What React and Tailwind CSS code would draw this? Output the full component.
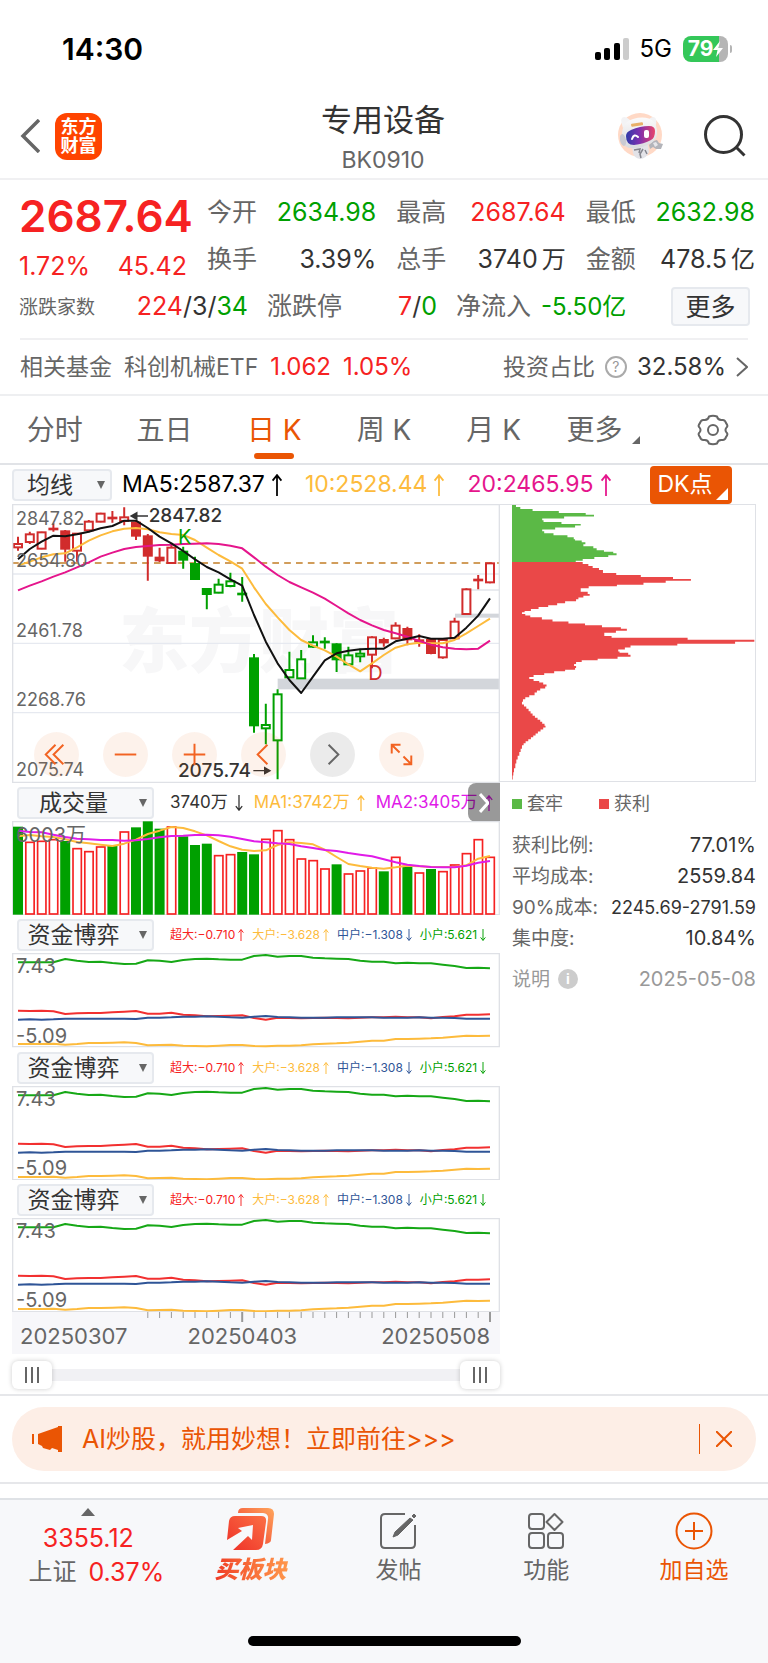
import { useState } from "react";

const STEP = 35.4;
const xAt = (i) => 18 + STEP * i;

// high, open/close top, open/close bottom, low, kind
const candles = [
  [110, 132, 142, 152, "r"], [95, 103, 126, 132, "r"], [95, 97, 146, 148, "r"],
  [70, 86, 88, 95, "R"], [90, 94, 146, 185, "R"], [100, 101, 152, 185, "r"],
  [60, 65, 91, 97, "r"], [38, 41, 65, 67, "r"], [33, 53, 55, 68, "R"],
  [22, 52, 63, 76, "r"], [62, 68, 107, 120, "R"], [102, 109, 167, 242, "R"],
  [143, 173, 181, 186, "R"], [128, 143, 189, 192, "r"], [140, 155, 179, 206, "G"],
  [170, 192, 237, 238, "G"], [264, 267, 282, 328, "G"], [236, 254, 278, 280, "g"],
  [218, 244, 258, 262, "g"], [231, 281, 283, 305, "G"], [462, 475, 676, 698, "G"],
  [611, 675, 685, 733, "g"], [568, 583, 721, 838, "g"], [455, 510, 532, 535, "g"],
  [450, 478, 535, 537, "g"], [406, 427, 440, 443, "g"], [412, 425, 427, 446, "G"],
  [430, 433, 478, 516, "G"], [440, 466, 493, 496, "g"], [446, 461, 469, 487, "g"],
  [409, 412, 464, 505, "r"], [413, 420, 427, 440, "R"], [367, 377, 415, 418, "r"],
  [380, 387, 418, 436, "R"], [403, 421, 424, 440, "R"], [415, 420, 459, 463, "R"],
  [414, 420, 472, 476, "r"], [353, 365, 415, 418, "r"], [265, 268, 342, 344, "r"],
  [225, 239, 241, 268, "R"], [188, 190, 247, 250, "r"],
];

const ma5 = [178, 147, 125, 107, 109, 103, 95, 85, 78, 62, 62, 84, 110, 130, 153, 178, 201, 217, 238, 257, 345, 425, 490, 540, 579, 530, 481, 460, 452, 448, 446, 446, 424, 416, 408, 416, 416, 413, 383, 347, 295];
const ma10 = [197, 185, 172, 163, 160, 142, 122, 106, 94, 86, 84, 88, 97, 102, 105, 120, 143, 165, 184, 206, 262, 312, 352, 390, 420, 437, 451, 470, 493, 514, 490, 465, 443, 433, 428, 430, 430, 420, 400, 378, 356];
const ma20 = [271, 257, 244, 230, 217, 202, 187, 170, 158, 147, 141, 138, 135, 134, 132, 131, 130, 132, 137, 145, 172, 200, 225, 246, 262, 278, 296, 318, 340, 360, 376, 390, 400, 410, 423, 434, 442, 446, 448, 446, 422];

const volumes = [141, 186, 183, 178, 184, 205, 214, 200, 196, 155, 143, 125, 147, 140, 170, 196, 192, 226, 223, 217, 224, 177, 151, 178, 236, 241, 266, 254, 281, 272, 263, 275, 231, 258, 278, 268, 274, 254, 220, 178, 231];
const volumeDown = [0, 4, 8, 10, 11, 12, 14, 15, 16, 19, 20, 27, 31, 33, 35];
const volMa1 = [170, 166, 170, 172, 179, 187, 191, 195, 199, 192, 180, 163, 153, 142, 145, 155, 167, 184, 200, 210, 214, 212, 196, 188, 190, 194, 210, 232, 253, 259, 264, 267, 263, 258, 260, 262, 262, 262, 257, 237, 229];
const volMa2 = [153, 157, 158, 165, 172, 177, 179, 181, 181, 183, 182, 178, 173, 169, 168, 166, 165, 167, 171, 178, 185, 188, 191, 193, 200, 205, 211, 214, 220, 225, 230, 239, 248, 255, 259, 262, 263, 263, 258, 249, 244];

const flowGreen = [128, 128, 128, 128, 118, 123, 127, 126, 130, 133, 132, 122, 123, 127, 121, 118, 117, 119, 120, 120, 109, 106, 111, 109, 109, 114, 116, 117, 118, 123, 126, 126, 131, 129, 131, 131, 135, 139, 145, 144, 146];
const flowRed = [273, 274, 273, 275, 283, 281, 280, 280, 278, 276, 274, 282, 282, 279, 285, 287, 290, 289, 288, 287, 295, 300, 294, 295, 296, 295, 294, 295, 296, 294, 293, 293, 291, 293, 293, 296, 292, 290, 285, 285, 284];
const flowBlue = [300, 299, 300, 299, 297, 297, 297, 297, 297, 297, 298, 294, 294, 293, 291, 291, 290, 291, 293, 294, 291, 289, 292, 293, 294, 294, 294, 293, 293, 293, 293, 294, 294, 294, 293, 294, 294, 295, 297, 297, 297];
const flowYellow = [373, 373, 373, 372, 375, 373, 370, 370, 369, 368, 370, 377, 376, 375, 378, 379, 380, 378, 376, 376, 379, 380, 378, 378, 377, 374, 372, 371, 369, 366, 363, 363, 358, 358, 357, 356, 354, 351, 348, 349, 348];

const trapped = [[45, 12], [51, 25], [57, 62], [63, 141], [69, 222], [74, 247], [80, 157], [86, 91], [91, 95], [96, 149], [102, 207], [107, 190], [113, 130], [119, 91], [124, 97], [130, 125], [136, 167], [142, 186], [148, 190], [152, 210], [157, 221], [163, 215], [169, 245], [175, 255], [181, 277], [186, 305], [190, 315], [196, 290], [202, 248], [208, 213], [213, 192], [217, 0]];
const profit = [[217, 213], [223, 230], [229, 243], [235, 262], [241, 274], [250, 314], [256, 388], [262, 485], [268, 539], [273, 463], [279, 396], [285, 316], [290, 231], [296, 207], [306, 228], [313, 234], [318, 215], [324, 200], [329, 193], [335, 160], [341, 136], [347, 109], [352, 80], [358, 57], [364, 38], [368, 30], [373, 40], [378, 55], [383, 90], [390, 122], [396, 170], [402, 220], [407, 271], [413, 328], [418, 346], [424, 313], [430, 278], [440, 300], [445, 529], [451, 730], [457, 672], [463, 498], [468, 357], [474, 340], [480, 320], [486, 324], [490, 350], [496, 357], [502, 318], [508, 258], [513, 210], [518, 193], [524, 187], [530, 193], [536, 190], [541, 160], [546, 127], [552, 97], [557, 65], [563, 52], [569, 65], [575, 82], [580, 94], [586, 104], [592, 100], [598, 85], [604, 75], [610, 68], [618, 52], [624, 40], [630, 33], [638, 30], [646, 36], [652, 43], [659, 50], [666, 56], [673, 62], [680, 69], [686, 77], [692, 85], [698, 91], [704, 98], [710, 101], [715, 94], [721, 86], [727, 78], [733, 71], [739, 64], [745, 57], [751, 49], [757, 41], [763, 35], [769, 30], [779, 26], [789, 22], [800, 17], [812, 13], [824, 10], [838, 6], [850, 4], [860, 2], [872, 0]];

const barsPath = (rows) => {
  let d = `M0 ${rows[0][0]}`;
  rows.forEach(([y, w], i) => {
    d += `H${w}`;
    if (rows[i + 1]) d += `V${rows[i + 1][0]}`;
  });
  return d + "H0Z";
};

const Line = ({ data, color, width = 5 }) => (
  <polyline
    points={data.map((y, i) => `${xAt(i)},${y}`).join(" ")}
    fill="none"
    stroke={color}
    strokeWidth={width}
    strokeLinejoin="round"
  />
);

const Picker = ({ label, options, className }) => (
  <div className={`relative shrink-0 ${className}`}>
    <select
      aria-label={label}
      className="block w-full h-8 appearance-none rounded border-2 border-[#e6e9ee] bg-[#f7f8fa] pl-2 pr-8 text-center text-[23px] leading-7 text-[#333]"
    >
      {options.map((o) => (
        <option key={o}>{o}</option>
      ))}
    </select>
    <svg viewBox="0 0 10 9" className="pointer-events-none absolute right-1.5 top-3 h-2 w-2.5">
      <path d="M0.5 0H9.5L5 9Z" fill="#666" />
    </svg>
  </div>
);

const Arrow = ({ down, className }) => (
  <svg
    viewBox="0 0 10 20"
    fill="none"
    stroke="currentColor"
    strokeWidth="1.6"
    className={`inline-block shrink-0 ${down ? "rotate-180" : ""} ${className}`}
  >
    <path d="M5 20V1M1 6L5 1L9 6" />
  </svg>
);

const Stat = ({ label, value, unit, color }) => (
  <div className="flex h-[47px] items-center justify-between text-[25px] whitespace-nowrap">
    <span className="text-[#666]">{label}</span>
    <span className={color}>
      {value}
      {unit && <span className="ml-1 text-2xl">{unit}</span>}
    </span>
  </div>
);

const StatusBar = () => (
  <div className="flex h-[94px] items-center justify-between pt-1 pr-9 pl-[62px]">
    <span className="text-3xl font-semibold text-black">14:30</span>
    <div className="flex items-center gap-[11px]">
      <svg viewBox="0 0 34 22" className="h-[22px] w-[34px]">
        <rect x="0" y="14" width="6" height="8" rx="2" />
        <rect x="9" y="10" width="6" height="12" rx="2" />
        <rect x="19" y="5" width="6" height="17" rx="2" />
        <rect x="28" y="0" width="6" height="22" rx="2" fill="#ccc" />
      </svg>
      <span className="text-2xl text-black">5G</span>
      <div className="flex items-center">
        <div className="flex h-[26px] w-[45px] items-center justify-center rounded-lg bg-linear-to-r from-[#34c759] from-80% to-[#b5b5b5] to-80% text-[21px] leading-6 font-bold text-white">
          79
          <svg viewBox="0 0 10 16" className="h-4 w-2.5">
            <path d="M7 0L0 9H4.500L3 16L10 7H5.500Z" fill="#fff" />
          </svg>
        </div>
        <span className="ml-0.5 h-2 w-0.5 rounded-r bg-[#b5b5b5]" />
      </div>
    </div>
  </div>
);

const Robot = () => (
  <svg viewBox="0 0 46 46" className="h-[46px] w-[46px]">
    <defs>
      <linearGradient id="visor">
        <stop offset="0" stopColor="#2f3aa8" />
        <stop offset=".45" stopColor="#7a2fb0" />
        <stop offset="1" stopColor="#e8436a" />
      </linearGradient>
      <linearGradient id="shell" x1="0" y1="0" x2="0" y2="1">
        <stop offset="0" stopColor="#fbfbfc" />
        <stop offset="1" stopColor="#d9dade" />
      </linearGradient>
    </defs>
    <circle cx="22" cy="22" r="22" fill="#ffd9c6" />
    <path d="M14 34L30 32L31 39Q28 46 22 46Q16 45 15 40Z" fill="#e3e3e8" />
    <path d="M16 37L22 36L21 40M25 36L22 41L23 45M27 37L29 41" stroke="#85868e" strokeWidth="1.500" fill="none" />
    <path d="M31 32L35 28L39 27L41 30L45 31L43 36L38 36L35 34L32 36Z" fill="#b3b4ba" />
    <path d="M35 30L38 29L40 32L37 34Z" fill="#e6e6ea" />
    <path d="M5 15Q1 4 6 4Q9 4 13 8Z" fill="#f3f3f5" />
    <path d="M31 6Q36 2 38 6Q39 10 37 15Z" fill="#f3f3f5" />
    <path d="M4 22Q4 9 15 6Q29 2 36 9Q41 17 38 25Q35 31 24 34Q12 37 7 33Q4 29 4 22Z" fill="url(#shell)" />
    <ellipse cx="5" cy="27" rx="3" ry="6" fill="#c9cad2" transform="rotate(-12 5 27)" />
    <path d="M8 23Q8 19 13 17Q22 13 31 13Q37 13 37 18Q37 25 33 27Q26 31 16 32Q8 32 8 23Z" fill="url(#visor)" />
    <path d="M14 26Q16 20 20 24" stroke="#fff" strokeWidth="2" fill="none" strokeLinecap="round" />
    <rect x="26" y="17" width="5" height="8" rx="2" fill="#fff" />
    <rect x="13" y="10" width="12" height="3" rx="1" fill="#e8b06a" transform="rotate(-8 19 11)" />
  </svg>
);

const Header = () => (
  <header className="flex h-[86px] items-center justify-between border-b-2 border-[#f0f0f2] pl-5 pr-[22px]">
    <div className="flex w-32 items-center gap-[15px]">
      <button type="button" aria-label="返回">
        <svg viewBox="0 0 20 34" className="h-[34px] w-5" fill="none" stroke="#666" strokeWidth="3.500">
          <path d="M19 1L3 17L19 33" />
        </svg>
      </button>
      <div className="flex h-[47px] w-[47px] items-center justify-center rounded-xl bg-[#ff4400] text-center text-lg leading-[19px] font-bold text-white">
        东方
        <br />
        财富
      </div>
    </div>
    <div className="pt-1.5 text-center">
      <h1 className="text-[31px] leading-[42px] text-[#333]">专用设备</h1>
      <p className="text-[23px] leading-[38px] text-[#666]">BK0910</p>
    </div>
    <div className="flex w-32 items-center justify-between">
      <Robot />
      <button type="button" aria-label="搜索">
        <svg viewBox="0 0 42 42" className="h-[42px] w-[42px]" fill="none" stroke="#333" strokeWidth="3">
          <circle cx="19.500" cy="19.500" r="18" />
          <path d="M32 32L40.500 40.500" />
        </svg>
      </button>
    </div>
  </header>
);

const Quote = () => (
  <section className="border-b-2 border-[#eeeff1] pt-[9px]">
    <div className="flex gap-4 pr-[13px] pl-[19px]">
      <div className="w-[172px] shrink-0">
        <div className="pt-1 text-[44px] leading-[46px] font-semibold text-[#f62222]">2687.64</div>
        <div className="mt-2.5 flex justify-between pr-1 text-[25px] leading-[34px] text-[#f62222]">
          <span>1.72%</span>
          <span>45.42</span>
        </div>
      </div>
      <div className="grid flex-1 grid-cols-3 gap-x-5">
        <Stat label="今开" value="2634.98" color="text-[#00a000]" />
        <Stat label="最高" value="2687.64" color="text-[#f62222]" />
        <Stat label="最低" value="2632.98" color="text-[#00a000]" />
        <Stat label="换手" value="3.39%" color="text-[#333]" />
        <Stat label="总手" value="3740" unit="万" color="text-[#333]" />
        <Stat label="金额" value="478.5" unit="亿" color="text-[#333]" />
      </div>
    </div>
    <div className="grid h-[47px] grid-cols-[229fr_170fr_196fr_79fr] items-center gap-[19px] pl-[19px] pr-[18px] text-[25px]">
      <div className="flex items-center justify-between">
        <span className="pt-1 text-[19px] text-[#666]">涨跌家数</span>
        <span className="text-[#333]">
          <span className="text-[#f62222]">224</span>/3/<span className="text-[#00a000]">34</span>
        </span>
      </div>
      <div className="flex items-center justify-between">
        <span className="text-[#666]">涨跌停</span>
        <span className="text-[#333]">
          <span className="text-[#f62222]">7</span>/<span className="text-[#00a000]">0</span>
        </span>
      </div>
      <div className="flex items-center gap-2.5 whitespace-nowrap">
        <span className="text-[#666]">净流入</span>
        <span className="text-2xl text-[#00a000]">-5.50亿</span>
      </div>
      <button type="button" className="h-[39px] rounded border-2 border-[#e6e9ee] bg-[#f7f8fa] leading-8 text-[#333]">
        更多
      </button>
    </div>
    <div className="mx-5 mt-2 flex h-14 items-center justify-between border-t-2 border-[#f0f0f2] text-[23px] whitespace-nowrap text-[#666]">
      <div className="flex items-center gap-3">
        <span>相关基金</span>
        <span>科创机械ETF</span>
        <span className="text-2xl text-[#f62222]">1.062</span>
        <span className="text-2xl text-[#f62222]">1.05%</span>
      </div>
      <a href="#ratio" className="flex items-center gap-2.5">
        <span>投资占比</span>
        <span className="flex h-[22px] w-[22px] items-center justify-center rounded-full border-2 border-[#aaa] text-sm text-[#999]">?</span>
        <span className="text-2xl text-[#333]">32.58%</span>
        <svg viewBox="0 0 12 20" className="h-5 w-3" fill="none" stroke="#666" strokeWidth="2">
          <path d="M1 1L11 10L1 19" />
        </svg>
      </a>
    </div>
  </section>
);

const tabs = ["分时", "五日", "日 K", "周 K", "月 K", "更多"];

const Tabs = () => {
  const [active, setActive] = useState("日 K");

  return (
    <nav className="grid h-[69px] grid-cols-7 border-b-2 border-[#e1e3e7] text-[28px]">
      {tabs.map((t) => (
        <button
          key={t}
          type="button"
          onClick={() => setActive(t)}
          className={`relative flex items-center justify-center whitespace-nowrap ${active === t ? "text-[#ea5504]" : "text-[#666]"}`}
        >
          {t}
          {t === "更多" && (
            <svg viewBox="0 0 8 8" className="ml-2.5 mt-5 h-2 w-2">
              <path d="M8 0V8H0Z" fill="#666" />
            </svg>
          )}
          {active === t && <span className="absolute bottom-1 h-1.5 w-10 rounded-full bg-[#ea5504]" />}
        </button>
      ))}
      <button type="button" aria-label="设置" className="flex items-center justify-center">
        <svg viewBox="0 0 32 32" className="h-8 w-8" fill="none" stroke="#666" strokeWidth="2">
          <path d="M12 2.500Q16 1 20 2.500Q21 6.500 25 6Q28 5.500 29 9Q31.500 12 29.500 13.500Q27.500 16 29.500 18.500Q31.500 20 29 23Q28 26.500 25 26Q21 25.500 20 29.500Q16 31 12 29.500Q11 25.500 7 26Q4 26.500 3 23Q.5 20 2.500 18.500Q4.500 16 2.500 13.500Q.5 12 3 9Q4 5.500 7 6Q11 6.500 12 2.500Z" strokeLinejoin="round" />
          <circle cx="16" cy="16" r="5" />
        </svg>
      </button>
    </nav>
  );
};

const MaRow = () => (
  <div className="flex h-[39px] items-center justify-between px-3">
    <div className="flex items-center gap-2.5 text-[23px]">
      <Picker label="指标" options={["均线"]} className="w-[100px]" />
      <span className="flex items-center text-black">
        MA5:2587.37
        <Arrow className="ml-1.5 h-[22px] w-3" />
      </span>
      <span className="ml-3 flex items-center text-[#fdbb3c]">
        10:2528.44
        <Arrow className="ml-1.5 h-[22px] w-3" />
      </span>
      <span className="ml-3 flex items-center text-[#e5158c]">
        20:2465.95
        <Arrow className="ml-1.5 h-[22px] w-3" />
      </span>
    </div>
    <button type="button" className="relative mr-6 h-[38px] w-[82px] rounded bg-[#ea5504] pr-3 text-[23px] whitespace-nowrap text-white">
      DK点
      <svg viewBox="0 0 12 12" className="absolute right-1 bottom-1 h-3 w-3">
        <path d="M12 0V12H0Z" fill="#fff" />
      </svg>
    </button>
  </div>
);

const icons = [
  { name: "最左", d: "M22 13L12 23L22 33M30 13L20 23L30 33" },
  { name: "缩小", d: "M12 23H34" },
  { name: "放大", d: "M12 23H34M23 12V34" },
  { name: "左移", d: "M27 13L17 23L27 33" },
  { name: "右移", d: "M19 13L29 23L19 33", grey: true },
  { name: "全屏", d: "M13 22V13H22M13 13L21 21M25 33H33V24M33 33L25 25" },
];

const KChart = () => (
  <div className="relative text-lg leading-6 text-[#666]">
    <div className="pointer-events-none absolute inset-x-0 top-[92px] pl-1.5 text-center text-[70px] leading-[92px] font-black text-[#f7f7f8]">
      东方财富
    </div>
    <svg viewBox="0 12 1464 837" className="relative block w-full">
      <path d="M0 222H1464M0 430H1464M0 638H1464" stroke="#e6e9f0" strokeWidth="4" />
      <path d="M1374 270H1464" stroke="#dfe2e8" strokeWidth="4" />
      <rect x="1329" y="341" width="135" height="12" fill="#d3d6db" />
      <rect x="797" y="536" width="667" height="32" fill="#d3d6db" />
      <path d="M0 189H1464" stroke="#d19d5b" strokeWidth="6" strokeDasharray="20 15.500" />
      {candles.map(([high, top, bottom, low, kind], i) => {
        const color = kind.toLowerCase() === "r" ? "#d12c2c" : "#00a000";
        const filled = kind === "R" || kind === "G";
        const x = xAt(i);
        return (
          <g key={i} stroke={color} strokeWidth="6">
            <path d={`M${x} ${high}V${top}M${x} ${bottom}V${low}`} />
            <rect x={x - 12} y={top} width="24" height={bottom - top} fill={filled ? color : "none"} />
          </g>
        );
      })}
      <Line data={ma10} color="#fdbb3c" width={6} />
      <Line data={ma20} color="#e5158c" width={6} />
      <Line data={ma5} color="#111" width={6} />
      <path d="M408 48H358M374 39L358 48L374 57Z" stroke="#333" strokeWidth="5" fill="#333" />
      <path d="M724 812H772M758 803L774 812L758 821Z" stroke="#333" strokeWidth="4" fill="#333" />
      <path d="M0 14H1464M0 847H1464M2 12V849M1462 12V849" stroke="#dfe1e6" strokeWidth="4" />
    </svg>
    <div className="absolute inset-y-0 left-1 flex flex-col justify-between">
      <span className="mt-[3px]">2847.82</span>
      <span className="-mt-7">2654.80</span>
      <span>2461.78</span>
      <span>2268.76</span>
      <span className="mb-px">2075.74</span>
    </div>
    <span className="absolute top-0 left-[28%] text-[19px] font-medium text-[#333]">2847.82</span>
    <span className="absolute bottom-0 left-[34%] text-[19px] font-medium text-[#333]">2075.74</span>
    <span className="absolute top-[19px] left-[34%] text-xl text-[#00a000]">K</span>
    <span className="absolute top-[155px] left-[73%] text-xl text-[#d12c2c]">D</span>
    <div className="absolute bottom-1.5 left-[22px] flex gap-6">
      {icons.map((b) => (
        <button
          key={b.name}
          type="button"
          aria-label={b.name}
          className={`h-[45px] w-[45px] rounded-full ${b.grey ? "bg-black/8" : "bg-[#ea5504]/8"}`}
        >
          <svg viewBox="0 0 46 46" className="h-full w-full" fill="none" stroke={b.grey ? "#666" : "#f26322"} strokeWidth="2">
            <path d={b.d} />
          </svg>
        </button>
      ))}
    </div>
  </div>
);

const VolumeChart = () => (
  <>
    <div className="relative flex h-[38px] items-center pt-0.5 pl-[5px] text-[17px] whitespace-nowrap">
      <Picker label="副图一" options={["成交量", "资金博弈"]} className="w-[137px]" />
      <span className="ml-4 flex items-center text-[#333]">
        3740万
        <Arrow down className="ml-1.5 h-4 w-2.5" />
      </span>
      <span className="ml-2.5 flex items-center text-[#fdbb3c]">
        MA1:3742万
        <Arrow className="ml-1.5 h-4 w-2.5" />
      </span>
      <span className="ml-2.5 flex items-center text-[#e01be8]">
        MA2:3405万
        <Arrow className="ml-1.5 h-4 w-2.5" />
      </span>
      <button type="button" aria-label="更多指标" className="absolute top-0 right-0 flex h-[39px] w-8 items-center justify-center rounded-l-lg bg-black/40">
        <svg viewBox="0 0 10 20" className="h-5 w-2.5" fill="none" stroke="#fff" strokeWidth="3">
          <path d="M1 1L9 10L1 19" />
        </svg>
      </button>
    </div>
    <div className="relative">
      <svg viewBox="0 124 1464 283" className="block w-full">
        <path d="M0 126H1464M0 405H1464M2 124V407M1462 124V407" stroke="#dfe1e6" strokeWidth="4" />
        {volumes.map((top, i) =>
          volumeDown.includes(i) ? (
            <rect key={i} x={xAt(i) - 15} y={top} width="30" height={405 - top} fill="#00a000" />
          ) : (
            <rect key={i} x={xAt(i) - 12} y={top + 2} width="25" height={401 - top} fill="#fff" stroke="#f62222" strokeWidth="5" />
          )
        )}
        <Line data={volMa1} color="#fdbb3c" width={6} />
        <Line data={volMa2} color="#e01be8" width={6} />
      </svg>
      <span className="absolute top-0 left-1 text-xl leading-7 text-[#666]">6003万</span>
    </div>
  </>
);

const flows = [
  { name: "超大", value: "−0.710", color: "text-[#f62222]" },
  { name: "大户", value: "−3.628", color: "text-[#fdbb3c]" },
  { name: "中户", value: "−1.308", color: "text-[#2f5597]", down: true },
  { name: "小户", value: "5.621", color: "text-[#00a000]", down: true },
];

const FlowChart = ({ id }) => (
  <>
    <div className="flex h-[38px] items-center pt-0.5 pl-[5px]">
      <Picker label={id} options={["资金博弈", "成交量"]} className="w-[137px]" />
      <div className="ml-4 flex gap-2 text-xs whitespace-nowrap">
        {flows.map((f) => (
          <span key={f.name} className={`flex items-center ${f.color}`}>
            {f.name}:{f.value}
            <Arrow down={f.down} className="ml-[3px] h-3 w-1.5" />
          </span>
        ))}
      </div>
    </div>
    <div className="relative">
      <svg viewBox="0 100 1464 283" className="block w-full">
        <path d="M0 102H1464M0 381H1464M2 100V383M1462 100V383" stroke="#dfe1e6" strokeWidth="4" />
        <Line data={flowGreen} color="#16a816" width={6} />
        <Line data={flowRed} color="#f23030" width={6} />
        <Line data={flowBlue} color="#2f5597" width={6} />
        <Line data={flowYellow} color="#fdbb3c" width={6} />
      </svg>
      <div className="absolute inset-y-0 left-1 flex flex-col justify-between text-xl leading-6 text-[#666]">
        <span className="mt-px">7.43</span>
        <span>-5.09</span>
      </div>
    </div>
  </>
);

const thumb =
  "pointer-events-none absolute inset-0 m-0 w-full appearance-none bg-transparent [&::-webkit-slider-thumb]:pointer-events-auto [&::-webkit-slider-thumb]:h-7 [&::-webkit-slider-thumb]:w-10 [&::-webkit-slider-thumb]:appearance-none [&::-webkit-slider-thumb]:rounded-md [&::-webkit-slider-thumb]:bg-white [&::-webkit-slider-thumb]:bg-[linear-gradient(to_right,#666_2px,#fff_2px,#fff_6px,#666_6px,#666_8px,#fff_8px,#fff_12px,#666_12px)] [&::-webkit-slider-thumb]:bg-[length:14px_16px] [&::-webkit-slider-thumb]:bg-center [&::-webkit-slider-thumb]:bg-no-repeat [&::-webkit-slider-thumb]:shadow-[0_0_5px_rgba(0,0,0,0.2)]";

const TimeAxis = () => (
  <>
    <div className="bg-[#f7f7fa]">
      <svg viewBox="0 0 1464 30" className="block w-full" stroke="#999" strokeWidth="3">
        {Array.from({ length: 30 }, (_, k) => k + 11).map((i) => (
          <path key={i} d={`M${xAt(i)} 0V${i === 19 || i === 40 ? 30 : 18}`} strokeWidth={i === 19 || i === 40 ? 6 : 3} />
        ))}
      </svg>
      <div className="flex justify-between pr-2.5 pb-1 pl-2 text-[22px] leading-7 text-[#666]">
        <span>20250307</span>
        <span className="-ml-6">20250403</span>
        <span>20250508</span>
      </div>
    </div>
    <div className="relative mt-[7px] mb-[5px] h-7">
      <div className="absolute inset-x-2 top-2 h-3 bg-[#f1f1f4]" />
      <input type="range" aria-label="开始日期" defaultValue="0" className={thumb} />
      <input type="range" aria-label="结束日期" defaultValue="100" className={thumb} />
    </div>
  </>
);

const chipRows = [
  ["获利比例:", "77.01%"],
  ["平均成本:", "2559.84"],
  ["90%成本:", "2245.69-2791.59"],
  ["集中度:", "10.84%"],
];

const ChipPanel = () => (
  <aside>
    <div className="-ml-3 border-y border-r border-[#dfe1e6] pl-3">
      <svg viewBox="0 45 732 831" className="block w-full">
        <path d={barsPath(trapped)} fill="#5bb946" />
        <path d={barsPath(profit)} fill="#ea4848" />
      </svg>
    </div>
    <div className="mt-2 flex h-7 items-center gap-9 text-lg text-[#666]">
      <span className="flex items-center gap-[5px]">
        <i className="h-2.5 w-2.5 bg-[#5bb946]" />
        套牢
      </span>
      <span className="flex items-center gap-[5px]">
        <i className="h-2.5 w-2.5 bg-[#ea4848]" />
        获利
      </span>
    </div>
    <dl className="mt-3 text-[19px] leading-[31px] whitespace-nowrap">
      {chipRows.map(([k, v]) => (
        <div key={k} className="flex justify-between">
          <dt className="text-[#666]">{k}</dt>
          <dd className={`text-[#333] ${v.length > 8 ? "text-lg leading-[31px]" : "text-xl leading-[31px]"}`}>{v}</dd>
        </div>
      ))}
    </dl>
    <div className="mt-2.5 flex items-center justify-between text-[19px] leading-[31px] text-[#999]">
      <button type="button" className="flex items-center gap-2">
        说明
        <span className="flex h-5 w-5 items-center justify-center rounded-full bg-[#ccc] text-sm font-bold text-white">i</span>
      </button>
      <span className="text-xl leading-[31px]">2025-05-08</span>
    </div>
  </aside>
);

const Banner = () => (
  <div className="border-y-2 border-[#e6e7ea] px-3 py-[11px]">
    <div className="flex h-16 items-center rounded-full bg-[#fdeee6] pr-6 pl-5 text-[#ea5504]">
      <svg viewBox="0 0 30 26" className="h-[26px] w-[30px]" fill="#ea5504">
        <path d="M0 8H2V18H0ZM6 8L26 1V0H30V26H26V24L20 22L18 24L11 22L10 20L6 18Z" />
      </svg>
      <a href="#ai" className="ml-5 flex-1 text-[25px]">
        AI炒股，就用妙想！立即前往&gt;&gt;&gt;
      </a>
      <span className="h-[30px] w-px bg-[#ea5504]" />
      <button type="button" aria-label="关闭" className="ml-4">
        <svg viewBox="0 0 16 16" className="h-4 w-4" fill="none" stroke="#ea5504" strokeWidth="2">
          <path d="M0 0L16 16M16 0L0 16" />
        </svg>
      </button>
    </div>
  </div>
);

const navItem = "flex flex-1 flex-col items-center text-[23px] leading-8";

const BottomNav = () => (
  <footer className="mt-3.5 border-t-2 border-[#dfe2e6] bg-[#f7f8fa]">
    <div className="flex h-[136px] pt-2">
      <div className="flex w-[23%] flex-col items-center text-[25px] leading-8 text-[#f62222]">
        <svg viewBox="0 0 14 8" className="mb-1.5 h-2 w-3.5">
          <path d="M0 8L7 0L14 8Z" fill="#666" />
        </svg>
        <span>3355.12</span>
        <span className="mt-0.5 flex gap-3 pl-4">
          <span className="text-2xl leading-8 text-[#666]">上证</span>0.37%
        </span>
      </div>
      <button type="button" className={navItem}>
        <svg viewBox="0 0 48 42" className="mb-1 h-[42px] w-12">
          <defs>
            <linearGradient id="buy" x1="0" y1="1" x2="1" y2="0">
              <stop offset="0" stopColor="#f0382c" />
              <stop offset="1" stopColor="#ffa65c" />
            </linearGradient>
            <linearGradient id="buyFront" x1="0" y1="1" x2="1" y2="0">
              <stop offset="0" stopColor="#ee3028" />
              <stop offset="1" stopColor="#fb7044" />
            </linearGradient>
          </defs>
          <path d="M11 5Q11 0 16 0H41Q47 0 47 6L44 32Q44 35 38 36L41 11Q42 6 36 5Z" fill="url(#buy)" />
          <path d="M2 13Q3 8 8 8H34Q40 8 39 14L36 36Q35 42 29 42H6L21 28L25 32L26 17L11 20L15 23L0 32Z" fill="url(#buyFront)" />
        </svg>
        <span className="bg-linear-to-r from-[#ee3224] to-[#ff9a4d] bg-clip-text px-1 text-2xl leading-8 font-black text-transparent italic">买板块</span>
      </button>
      <button type="button" className={`${navItem} text-[#666]`}>
        <svg viewBox="0 0 38 38" className="mt-1 mb-1 h-[38px] w-[38px]" fill="none" stroke="#666" strokeWidth="2">
          <path d="M26 2H6Q2 2 2 6V32Q2 36 6 36H32Q36 36 36 32V13" />
          <path d="M14 25L16 20L31 6L34 8L19 23Z" fill="#666" strokeWidth="1" />
          <path d="M33 4L35 2L37 4L35 6Z" fill="#666" strokeWidth="1" />
        </svg>
        发帖
      </button>
      <button type="button" className={`${navItem} text-[#666]`}>
        <svg viewBox="0 0 38 38" className="mt-1 mb-1 h-[38px] w-[38px]" fill="none" stroke="#666" strokeWidth="2">
          <rect x="2" y="2" width="15" height="15" rx="3" />
          <path d="M27.500 2L35.500 10L27.500 18L19.500 10Z" strokeLinejoin="round" />
          <rect x="2" y="21" width="15" height="15" rx="3" />
          <rect x="21" y="21" width="15" height="15" rx="3" />
        </svg>
        功能
      </button>
      <button type="button" className={`${navItem} text-[#ea5504]`}>
        <svg viewBox="0 0 38 38" className="mt-1 mb-1 h-[38px] w-[38px]" fill="none" stroke="#ea5504" strokeWidth="2">
          <circle cx="19" cy="19" r="17.500" />
          <path d="M10 19H28M19 10V28" />
        </svg>
        加自选
      </button>
    </div>
    <div className="mx-auto h-[27px] w-[273px]">
      <div className="h-2.5 rounded-full bg-black" />
    </div>
  </footer>
);

const App = () => {
  return (
    <div className="w-full bg-white font-['Inter','Noto_Sans_CJK_SC',sans-serif]">
      <StatusBar />
      <Header />
      <Quote />
      <Tabs />
      <MaRow />
      <main className="grid grid-cols-[minmax(0,2fr)_minmax(0,1fr)] gap-3 px-3">
        <div>
          <KChart />
          <VolumeChart />
          <FlowChart id="副图二" />
          <FlowChart id="副图三" />
          <FlowChart id="副图四" />
          <TimeAxis />
        </div>
        <ChipPanel />
      </main>
      <Banner />
      <BottomNav />
    </div>
  );
};

export default App;
